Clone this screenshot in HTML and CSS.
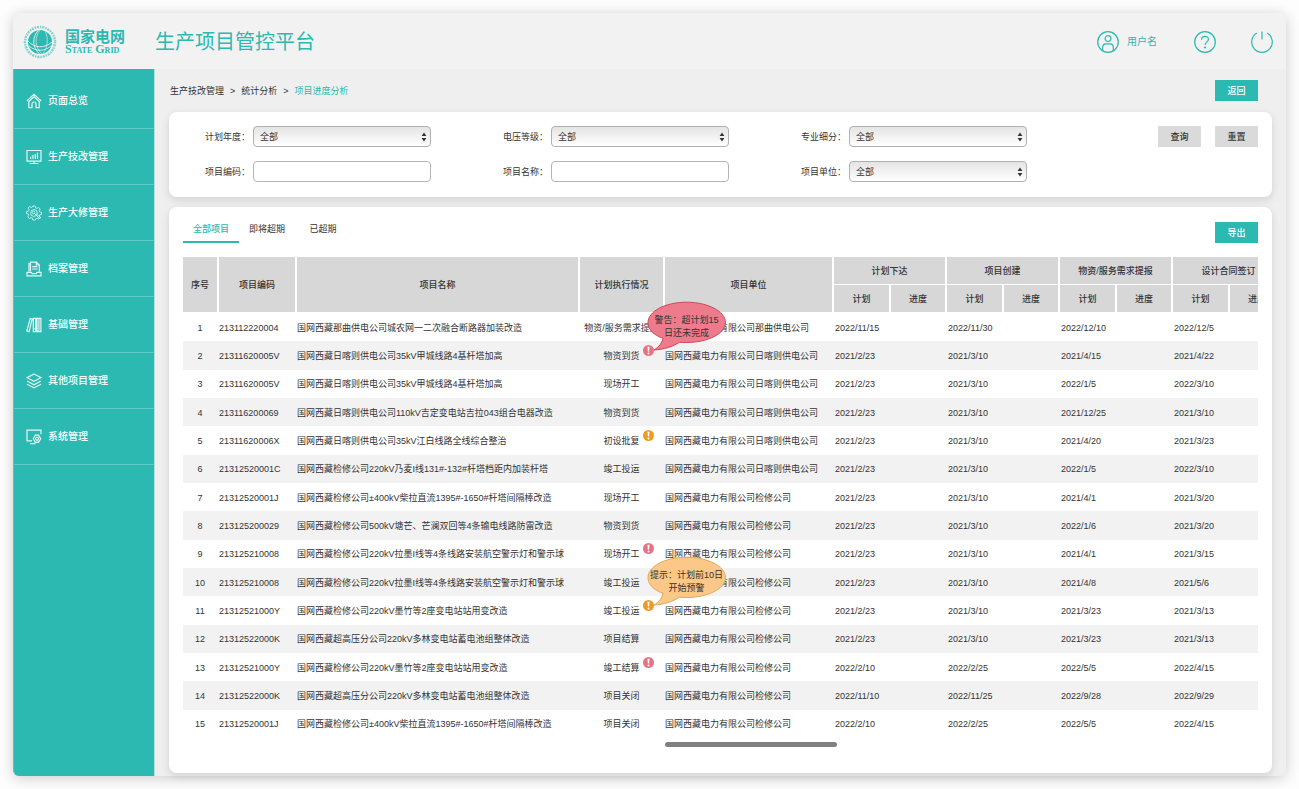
FILE: index.html
```
<!DOCTYPE html>
<html lang="zh-CN">
<head>
<meta charset="utf-8">
<title>生产项目管控平台</title>
<link rel="stylesheet" href="styles.css">
</head>
<body>
<svg class="defs" aria-hidden="true">
  <symbol id="alert" viewBox="0 0 11 11"><circle cx="5.5" cy="5.5" r="5.5" fill="currentColor"/><path d="M4.500 1.700h2l-.4 4.900H4.900z" fill="#fff"/><circle cx="5.5" cy="8.4" r="1" fill="#fff"/></symbol>
  <symbol id="balloon" viewBox="0 0 80 52"><path d="M16 37.300C6 33.800 1 28 1 21.500C1 10.500 18 1.200 39.500 1.200S78.500 10.500 78.500 21.500S61 41.500 39.500 41.500C37 41.500 34.600 41.500 32.500 41.200C26 45.500 17 48.500 7 49C12 46 15 42 16 37.300Z" fill="var(--fill)" stroke="var(--edge)" stroke-width="1"/></symbol>
  <symbol id="updown" viewBox="0 0 6 10"><path d="M3 .5 5.400 4H.6zM3 9.500.6 6h4.800z" fill="#333"/></symbol>
</svg>
<div class="app">
  <header class="topbar">
    <div class="brand">
      <svg class="globe" viewBox="0 0 34 34" fill="none" stroke="currentColor">
        <circle cx="17" cy="17" r="15" stroke-width="2.400" stroke-dasharray="1.500 .8 2.200 .9" opacity=".55"/>
        <circle cx="17" cy="17" r="12" fill="currentColor" stroke="none"/>
        <g stroke="#f2f2f2" stroke-width=".9">
          <path d="M15.500 5C9 12 9 22 16.500 29"/>
          <path d="M17 5C11.500 12 11.500 22 19 29" stroke-width=".6"/>
          <path d="M5 16C11 23 21 24 29 17"/>
          <path d="M6 21C13 27 22 26.500 28.500 20.500"/>
          <path d="M22 6C25.500 12 25 22 20 28.500" stroke-width=".6"/>
        </g>
      </svg>
      <div class="brand-text"><span class="brand-cn">国家电网</span><span class="brand-en">State Grid</span></div>
    </div>
    <h1 class="title">生产项目管控平台</h1>
    <div class="tools">
      <button class="tool user" type="button">
        <svg class="tool-icon" viewBox="0 0 22 22"><circle cx="11" cy="11" r="10.300"/><circle cx="11" cy="7.600" r="2.900"/><path d="M5.700 19.500v-3c0-2.400 1.300-3.600 3.300-3.600h4c2 0 3.300 1.200 3.300 3.600v3"/></svg>
        <span>用户名</span>
      </button>
      <button class="tool help" type="button" aria-label="帮助">
        <svg class="tool-icon" viewBox="0 0 22 22"><circle cx="11" cy="11" r="10.300"/><path d="M7.600 8.700c0-2 1.400-3.300 3.400-3.300s3.400 1.200 3.400 3c0 2.400-3.300 2.700-3.300 5.600"/><circle cx="11" cy="16.500" r=".5" fill="currentColor"/></svg>
      </button>
      <button class="tool" type="button" aria-label="退出">
        <svg class="tool-icon" viewBox="0 0 22 22"><path d="M11 .5v8M5.800 2.100a10.300 10.300 0 1 0 10.400 0"/></svg>
      </button>
    </div>
  </header>
  <div class="body">
    <nav class="sidebar">
      <a class="nav-item first" href="#"><svg class="nav-icon" viewBox="0 0 16 16"><path d="M.8 8 8 1.300 15.200 8M8 3.800 13.200 8.500v6.200H10V11c0-1.200-.8-2-2-2s-2 .8-2 2v3.700H2.800V8.500z"/></svg>页面总览</a>
      <a class="nav-item" href="#"><svg class="nav-icon" viewBox="0 0 16 16"><path d="M1 1.500h14v10.700H1zM8 12.200v2M3.500 14.500h9M4.700 7.500v2.500M7 6v4M9.300 5v5M11.500 3.800V10"/></svg>生产技改管理</a>
      <a class="nav-item" href="#"><svg class="nav-icon thin" viewBox="0 0 16 16"><path d="M6.800 1h2.400l.4 1.900 1.300.5 1.600-1 1.700 1.700-1 1.600.5 1.300 1.900.4v2l-1.900.4-.4 1.200 1.200 1.500-1.700 1.700-1.600-1-1.400.6L9.300 15H6.900l-.5-1.900-1.300-.5-1.700 1-1.600-1.700 1-1.600L2.300 9 .6 8.600V6.500l1.900-.4L3 4.700l-1-1.600 1.600-1.600 1.600 1 1.200-.5z"/><circle cx="8" cy="8" r="3.400"/><circle cx="7.500" cy="7.500" r="1.300"/><path d="m8.500 8.500 5.500 5.500M10 8.500l5 4.800"/></svg>生产大修管理</a>
      <a class="nav-item" href="#"><svg class="nav-icon" viewBox="0 0 16 16"><path d="M3 10.500V2.700h1.500V1.200h6L13.300 4v6.500M4.500 2.700v7.500M10.300 1.200V4h3M6.200 5.700h5.200M6.200 8h5.200M1 14.800v-3.500h4.300l.8 1.400h4l.8-1.400H15v3.500z"/></svg>档案管理</a>
      <a class="nav-item" href="#"><svg class="nav-icon" viewBox="0 0 16 16"><path d="M.8 14.200 4.200 1.500l2 .5L3 14.800zM7.300 1.300h2.500v13.400H7.300zM11 1.300h1.900v13.400H11zM12.900 1.300h2v13.400h-2zM7.300 12h2.500"/></svg>基础管理</a>
      <a class="nav-item" href="#"><svg class="nav-icon" viewBox="0 0 16 16"><path d="m8 1 7 3.700-7 3.700-7-3.700zM1 8l7 3.700L15 8M1 11.200l7 3.700 7-3.700"/></svg>其他项目管理</a>
      <a class="nav-item" href="#"><svg class="nav-icon" viewBox="0 0 16 16"><path d="M6 11.800H1V1.200h14v4M4 14.700h5.500"/><path d="M9.300 6.200h3.200l2.200 3.500-2.200 3.600H9.300l-2-3.600z"/><circle cx="11" cy="9.800" r="1.500"/></svg>系统管理</a>
    </nav>
    <main class="main">
      <div class="crumb-row">
        <div class="crumbs"><a href="#">生产技改管理</a><span>&gt;</span><a href="#">统计分析</a><span>&gt;</span><a class="current" href="#">项目进度分析</a></div>
        <button class="btn primary" type="button">返回</button>
      </div>
      <form class="card filters">
        <div class="fields">
          <div class="field"><label for="year">计划年度：</label><div class="select"><select id="year"><option>全部</option></select><svg><use href="#updown"/></svg></div></div>
          <div class="field"><label for="volt">电压等级：</label><div class="select"><select id="volt"><option>全部</option></select><svg><use href="#updown"/></svg></div></div>
          <div class="field"><label for="major">专业细分：</label><div class="select"><select id="major"><option>全部</option></select><svg><use href="#updown"/></svg></div></div>
          <div class="field"><label for="code">项目编码：</label><input id="code" type="text"></div>
          <div class="field"><label for="name">项目名称：</label><input id="name" type="text"></div>
          <div class="field"><label for="unit">项目单位：</label><div class="select"><select id="unit"><option>全部</option></select><svg><use href="#updown"/></svg></div></div>
        </div>
        <div class="actions"><button class="btn" type="button">查询</button><button class="btn" type="reset">重置</button></div>
      </form>
      <section class="card list">
        <div class="list-head">
          <div class="tabs"><button class="tab active" type="button">全部项目</button><button class="tab" type="button">即将超期</button><button class="tab" type="button">已超期</button></div>
          <button class="btn primary" type="button">导出</button>
        </div>
        <div class="table-wrap">
          <table class="grid">
            <colgroup><col class="c-no"><col class="c-code"><col class="c-name"><col class="c-status"><col class="c-unit"><col class="c-plan"><col class="c-prog"><col class="c-plan"><col class="c-prog"><col class="c-plan"><col class="c-prog"><col class="c-plan"><col class="c-prog"></colgroup>
            <thead>
              <tr><th rowspan="2">序号</th><th rowspan="2">项目编码</th><th rowspan="2">项目名称</th><th rowspan="2">计划执行情况</th><th rowspan="2">项目单位</th><th colspan="2">计划下达</th><th colspan="2">项目创建</th><th colspan="2">物资/服务需求提报</th><th colspan="2">设计合同签订</th></tr>
              <tr><th>计划</th><th>进度</th><th>计划</th><th>进度</th><th>计划</th><th>进度</th><th>计划</th><th>进度</th></tr>
            </thead>
            <tbody>
              <tr><td>1</td><td>213112220004</td><td>国网西藏那曲供电公司城农网一二次融合断路器加装改造</td><td>物资/服务需求提报</td><td>国网西藏电力有限公司那曲供电公司</td><td colspan="2">2022/11/15</td><td colspan="2">2022/11/30</td><td colspan="2">2022/12/10</td><td colspan="2">2022/12/5</td></tr>
              <tr><td>2</td><td>21311620005V</td><td>国网西藏日喀则供电公司35kV甲城线路4基杆塔加高</td><td><span class="status">物资到货<span class="badge danger"><svg class="dot"><use href="#alert"/></svg><span class="bubble"><svg class="shape"><use href="#balloon"/></svg><span class="bubble-text">警告：超计划15<br>日还未完成</span></span></span></span></td><td>国网西藏电力有限公司日喀则供电公司</td><td colspan="2">2021/2/23</td><td colspan="2">2021/3/10</td><td colspan="2">2021/4/15</td><td colspan="2">2021/4/22</td></tr>
              <tr><td>3</td><td>21311620005V</td><td>国网西藏日喀则供电公司35kV甲城线路4基杆塔加高</td><td>现场开工</td><td>国网西藏电力有限公司日喀则供电公司</td><td colspan="2">2021/2/23</td><td colspan="2">2021/3/10</td><td colspan="2">2022/1/5</td><td colspan="2">2022/3/10</td></tr>
              <tr><td>4</td><td>213116200069</td><td>国网西藏日喀则供电公司110kV吉定变电站吉拉043组合电器改造</td><td>物资到货</td><td>国网西藏电力有限公司日喀则供电公司</td><td colspan="2">2021/2/23</td><td colspan="2">2021/3/10</td><td colspan="2">2021/12/25</td><td colspan="2">2021/3/10</td></tr>
              <tr><td>5</td><td>21311620006X</td><td>国网西藏日喀则供电公司35kV江白线路全线综合整治</td><td><span class="status">初设批复<span class="badge warn"><svg class="dot"><use href="#alert"/></svg></span></span></td><td>国网西藏电力有限公司日喀则供电公司</td><td colspan="2">2021/2/23</td><td colspan="2">2021/3/10</td><td colspan="2">2021/4/20</td><td colspan="2">2021/3/23</td></tr>
              <tr><td>6</td><td>21312520001C</td><td>国网西藏检修公司220kV乃麦I线131#-132#杆塔档距内加装杆塔</td><td>竣工投运</td><td>国网西藏电力有限公司日喀则供电公司</td><td colspan="2">2021/2/23</td><td colspan="2">2021/3/10</td><td colspan="2">2022/1/5</td><td colspan="2">2022/3/10</td></tr>
              <tr><td>7</td><td>21312520001J</td><td>国网西藏检修公司±400kV柴拉直流1395#-1650#杆塔间隔棒改造</td><td>现场开工</td><td>国网西藏电力有限公司检修公司</td><td colspan="2">2021/2/23</td><td colspan="2">2021/3/10</td><td colspan="2">2021/4/1</td><td colspan="2">2021/3/20</td></tr>
              <tr><td>8</td><td>213125200029</td><td>国网西藏检修公司500kV塘芒、芒澜双回等4条输电线路防雷改造</td><td>物资到货</td><td>国网西藏电力有限公司检修公司</td><td colspan="2">2021/2/23</td><td colspan="2">2021/3/10</td><td colspan="2">2022/1/6</td><td colspan="2">2021/3/20</td></tr>
              <tr><td>9</td><td>213125210008</td><td>国网西藏检修公司220kV拉墨I线等4条线路安装航空警示灯和警示球</td><td><span class="status">现场开工<span class="badge danger"><svg class="dot"><use href="#alert"/></svg></span></span></td><td>国网西藏电力有限公司检修公司</td><td colspan="2">2021/2/23</td><td colspan="2">2021/3/10</td><td colspan="2">2021/4/1</td><td colspan="2">2021/3/15</td></tr>
              <tr><td>10</td><td>213125210008</td><td>国网西藏检修公司220kV拉墨I线等4条线路安装航空警示灯和警示球</td><td>竣工投运</td><td>国网西藏电力有限公司检修公司</td><td colspan="2">2021/2/23</td><td colspan="2">2021/3/10</td><td colspan="2">2021/4/8</td><td colspan="2">2021/5/6</td></tr>
              <tr><td>11</td><td>21312521000Y</td><td>国网西藏检修公司220kV墨竹等2座变电站站用变改造</td><td><span class="status">竣工投运<span class="badge warn"><svg class="dot"><use href="#alert"/></svg><span class="bubble"><svg class="shape"><use href="#balloon"/></svg><span class="bubble-text">提示：计划前10日<br>开始预警</span></span></span></span></td><td>国网西藏电力有限公司检修公司</td><td colspan="2">2021/2/23</td><td colspan="2">2021/3/10</td><td colspan="2">2021/3/23</td><td colspan="2">2021/3/13</td></tr>
              <tr><td>12</td><td>21312522000K</td><td>国网西藏超高压分公司220kV多林变电站蓄电池组整体改造</td><td>项目结算</td><td>国网西藏电力有限公司检修公司</td><td colspan="2">2021/2/23</td><td colspan="2">2021/3/10</td><td colspan="2">2021/3/23</td><td colspan="2">2021/3/13</td></tr>
              <tr><td>13</td><td>21312521000Y</td><td>国网西藏检修公司220kV墨竹等2座变电站站用变改造</td><td><span class="status">竣工结算<span class="badge danger"><svg class="dot"><use href="#alert"/></svg></span></span></td><td>国网西藏电力有限公司检修公司</td><td colspan="2">2022/2/10</td><td colspan="2">2022/2/25</td><td colspan="2">2022/5/5</td><td colspan="2">2022/4/15</td></tr>
              <tr><td>14</td><td>21312522000K</td><td>国网西藏超高压分公司220kV多林变电站蓄电池组整体改造</td><td>项目关闭</td><td>国网西藏电力有限公司检修公司</td><td colspan="2">2022/11/10</td><td colspan="2">2022/11/25</td><td colspan="2">2022/9/28</td><td colspan="2">2022/9/29</td></tr>
              <tr><td>15</td><td>21312520001J</td><td>国网西藏检修公司±400kV柴拉直流1395#-1650#杆塔间隔棒改造</td><td>项目关闭</td><td>国网西藏电力有限公司检修公司</td><td colspan="2">2022/2/10</td><td colspan="2">2022/2/25</td><td colspan="2">2022/5/5</td><td colspan="2">2022/4/15</td></tr>
            </tbody>
          </table>
        </div>
        <div class="scroll-track"><div class="scroll-thumb"></div></div>
      </section>
    </main>
  </div>
</div>
</body>
</html>
```
FILE: styles.css
```
:root {
  --teal: #2cb9b1;
  --text: #333;
}
* { box-sizing: border-box; }
body {
  margin: 0;
  padding: 13px;
  min-height: 100vh;
  display: flex;
  background: #fdfdfd;
  color: var(--text);
  font: 9px/12px "Liberation Sans", "Noto Sans CJK SC", sans-serif;
}
button, input, select { font: inherit; color: inherit; }
button { border: 0; padding: 0; background: none; cursor: pointer; }
a { color: inherit; text-decoration: none; }
.defs { position: absolute; width: 0; height: 0; }

.app {
  flex: 1;
  min-width: 0;
  display: flex;
  flex-direction: column;
  border-radius: 6px;
  background: #efefef;
  box-shadow: 0 2px 14px rgba(0, 0, 0, .2);
}

.topbar {
  height: 56px;
  padding: 1px 13px 0 10px;
  display: flex;
  align-items: center;
  border-radius: 6px 6px 0 0;
  background: #f2f2f2;
  color: var(--teal);
}
.brand { display: flex; align-items: center; gap: 8px; width: 132px; }
.globe { width: 34px; height: 34px; }
.brand-text { display: flex; flex-direction: column; white-space: nowrap; }
.brand-cn { font-size: 15px; line-height: 15px; font-weight: 700; }
.brand-en { font: 700 12px/10px "Liberation Serif", serif; font-variant: small-caps; }
.title { margin: 0; font-size: 20px; line-height: 28px; font-weight: 400; }
.tools { margin-left: auto; display: flex; align-items: center; }
.tool { display: flex; align-items: center; gap: 8px; color: var(--teal); font-size: 10px; }
.user { margin-right: 37px; }
.help { margin-right: 35px; }
.tool-icon { width: 22px; height: 22px; fill: none; stroke: currentColor; stroke-width: 1.2; }

.body { flex: 1; display: flex; min-height: 0; }
.sidebar {
  flex: none;
  width: 142px;
  background: var(--teal);
  border-right: 1px solid #b5dedb;
  border-left: 1px solid #4fc5be;
  border-radius: 0 0 0 6px;
}
.nav-item {
  height: 56px;
  padding: 1px 0 0 12px;
  display: flex;
  align-items: center;
  gap: 6px;
  border-bottom: 1px solid #63cbc5;
  color: #f4fffe;
  font-size: 10px;
  font-weight: 500;
}
.nav-item.first { height: 60px; padding-top: 5px; }
.nav-icon { width: 16px; height: 16px; fill: none; stroke: #e4f7f5; stroke-width: 1.2; }
.nav-icon.thin { stroke-width: .8; }

.main {
  flex: 1;
  min-width: 0;
  padding: 11px 14px 3px;
  display: flex;
  flex-direction: column;
}
.crumb-row { display: flex; align-items: center; justify-content: space-between; padding-right: 14px; }
.crumbs { display: flex; gap: 6px; padding-left: 1px; }
.crumbs .current { color: var(--teal); }
.btn {
  width: 43px;
  height: 21px;
  flex: none;
  background: #dadada;
  font-weight: 500;
  text-align: center;
}
.btn.primary { background: var(--teal); color: #fff; }

.card {
  background: #fff;
  border-radius: 8px;
  box-shadow: 0 3px 8px rgba(0, 0, 0, .12);
}
.filters {
  margin-top: 11px;
  padding: 14px 14px 15px 36px;
  display: flex;
  gap: 59px;
}
.fields { flex: 1; display: grid; grid-template-columns: repeat(3, 1fr); row-gap: 14px; }
.field { display: flex; align-items: center; gap: 3px; padding-right: 72px; }
.field label { flex: none; white-space: nowrap; }
.field input, .select { flex: 1; min-width: 0; height: 21px; }
.field input { border: 1px solid #b5b5b5; border-radius: 4px; background: #fff; padding: 0 6px; }
.select { position: relative; }
.select select {
  width: 100%;
  height: 100%;
  appearance: none;
  border: 1px solid #b0b0b0;
  border-radius: 4px;
  padding: 0 16px 0 6px;
  background: linear-gradient(#e4e4e4, #fff);
}
.select svg { position: absolute; right: 4px; top: 6px; width: 6px; height: 10px; pointer-events: none; }
.actions { display: flex; gap: 14px; }

.list { flex: 1; margin-top: 10px; padding: 7px 14px 14px; }
.list-head { display: flex; justify-content: space-between; align-items: flex-end; }
.tabs { display: flex; }
.tab { width: 56px; height: 29px; padding-top: 2px; border-bottom: 2px solid transparent; text-align: center; }
.tab.active { color: var(--teal); border-color: var(--teal); font-weight: 500; }
.table-wrap { margin-top: 14px; overflow: hidden; }
.grid { width: 1103px; height: 481px; table-layout: fixed; border-collapse: separate; border-spacing: 0; white-space: nowrap; }
.c-no { width: 36px; }
.c-code { width: 78px; }
.c-name { width: 283px; }
.c-status { width: 85px; }
.c-unit { width: 169px; }
.c-plan { width: 57px; }
.c-prog { width: 56px; }
.grid thead tr { height: 28px; }
.grid th {
  padding: 1px 0 0;
  background: #d7d7d7;
  border-right: 2px solid #fff;
  border-bottom: 1px solid #fff;
  font-weight: 500;
}
.grid td { padding: 1px 0 0; }
.grid td:nth-child(n+6) { padding-left: 1px; }
.grid td:nth-child(1), .grid td:nth-child(4) { text-align: center; padding-right: 2px; }
.grid tbody tr:nth-child(even) { background: #f2f2f2; }

.status { position: relative; }
.badge { position: absolute; left: 100%; top: -6px; margin-left: 3px; width: 11px; height: 11px; z-index: 1; }
.danger { color: #e57385; --fill: #ee7b8b; --edge: #c9485c; }
.warn { color: #ee9a26; --fill: #fbc887; --edge: #e0a85f; }
.dot { display: block; width: 11px; height: 11px; }
.bubble { position: absolute; left: 4px; bottom: 3px; width: 80px; height: 52px; color: var(--text); }
.shape { position: absolute; left: 0; top: 0; width: 80px; height: 52px; }
.bubble-text { position: relative; display: block; padding-top: 13px; line-height: 13px; text-align: center; }

.scroll-track { margin: 4px 0 0 482px; }
.scroll-thumb { width: 29%; height: 5px; border-radius: 3px; background: #808080; }
```
